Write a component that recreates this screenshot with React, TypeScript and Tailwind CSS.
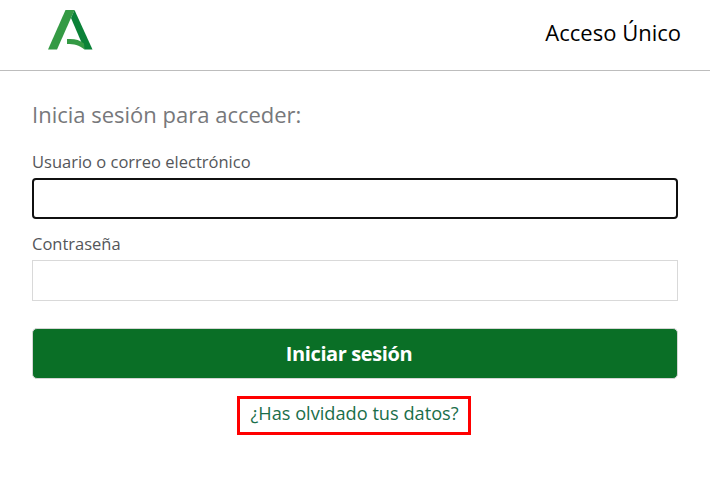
export default function App() {
  return (
    <div className="min-h-[477px] bg-white font-['Open_Sans',sans-serif]">
      {/* Header */}
      <header className="h-[71px] flex items-start justify-between border-b border-[#bdbdbd]">
        <div className="pl-[47px] pt-[10px]">
          <svg width="46" height="41" viewBox="0 0 46 41">
            <path d="M18.5 0H27.5L10 39.5H1Z" fill="#349a44" />
            <path d="M27.5 0L45.5 39.5H37.5L24 8Z" fill="#0b8238" />
            <path d="M20 29C27 28.5 32.5 29.5 37 33.5L37.5 39.5C32 35 27 34 20 34Z" fill="#349a44" />
          </svg>
        </div>
        <div className="pr-[29px] pt-[17px] text-[22px] leading-[30px] text-black">Acceso Único</div>
      </header>

      <main className="px-[32px]">
        <h1 className="mt-[28px] text-[22px] leading-[30px] text-[#77787b]">Inicia sesión para acceder:</h1>

        <label className="block mt-[22px] text-[16.5px] leading-[22px] text-[#54565a]">Usuario o correo electrónico</label>
        <input className="block mt-[5px] w-full h-[41px] rounded-[4px] border-2 border-[#101010] bg-white outline-none" />

        <label className="block mt-[14px] text-[16.5px] leading-[22px] text-[#54565a]">Contraseña</label>
        <input className="block mt-[5px] w-full h-[41px] border border-[#d9d9d9] bg-white outline-none" />

        <button className="block mt-[27px] w-full h-[51px] pr-[12px] rounded-[5px] border border-[#d5d5d5] bg-[#0a6f26] text-white text-[20px] font-bold tracking-[-0.4px]">
          Iniciar sesión
        </button>

        <div className="mt-[17px] flex justify-center pr-[2px]">
          <a className="w-[234px] h-[39px] pb-[3px] pl-[1px] border-[3px] border-[#ff0000] flex items-center justify-center text-[18.2px] text-[#1a6e4a]">
            ¿Has olvidado tus datos?
          </a>
        </div>
      </main>
    </div>
  );
}
